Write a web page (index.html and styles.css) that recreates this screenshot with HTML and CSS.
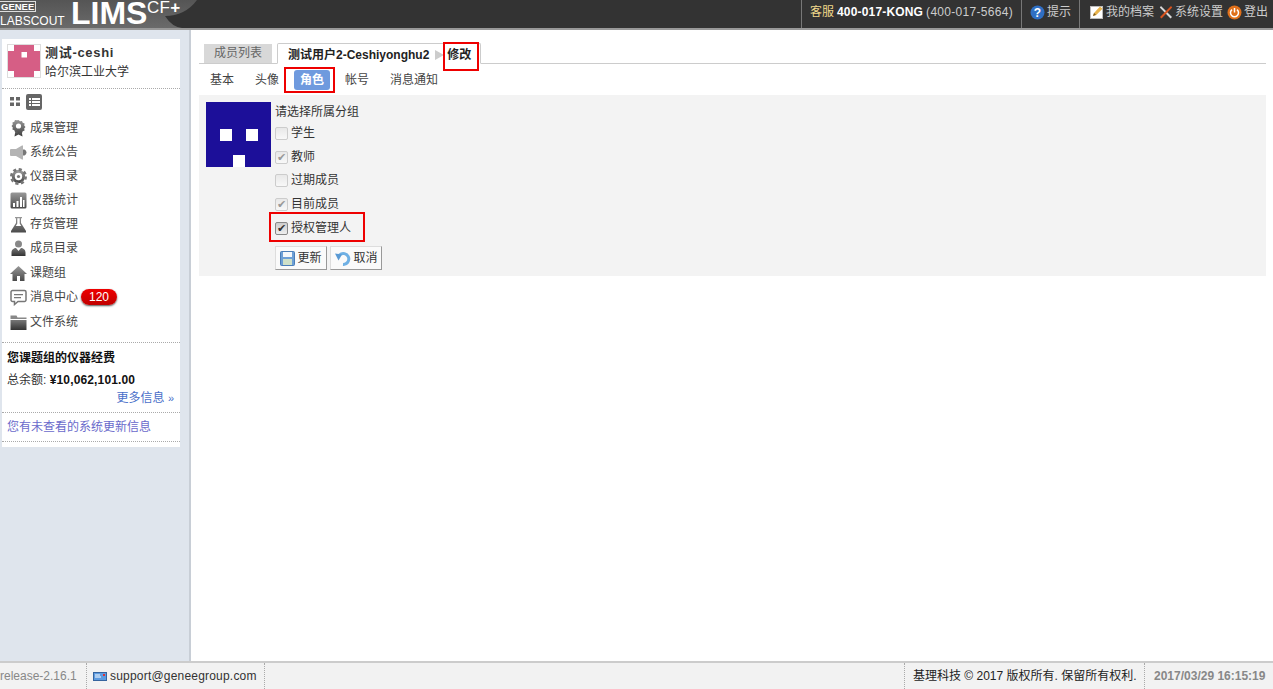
FILE: index.html
```html
<!DOCTYPE html>
<html lang="zh">
<head>
<meta charset="utf-8">
<title>LIMS</title>
<link rel="stylesheet" href="styles.css">
</head>
<body>
<svg class="defs" width="0" height="0"><defs><linearGradient id="gr" x1="0" y1="0" x2="0" y2="1"><stop offset="0" stop-color="#999"/><stop offset="1" stop-color="#4a4a4a"/></linearGradient><linearGradient id="grd" x1="0" y1="0" x2="0" y2="1"><stop offset="0" stop-color="#777"/><stop offset="1" stop-color="#333"/></linearGradient></defs></svg>
<header class="top">
  <div class="logo">
    <svg class="logo-bg" width="210" height="28" viewBox="0 0 210 28"><path d="M165 16Q172 27 182 28H210V0H197Q185 16 165 16z" fill="#333"/></svg>
    <div class="logo-left"><span class="genee">GENEE</span><span class="labscout">LABSCOUT</span></div>
    <span class="lims">LIMS</span><span class="cf">CF<b>+</b></span>
  </div>
  <div class="top-right">
    <div class="seg seg-tel"><span class="kf">客服</span><b>400-017-KONG</b><span class="tel">(400-017-5664)</span></div>
    <div class="seg seg-tip">
      <svg class="ti" width="15" height="15" viewBox="0 0 15 15"><circle cx="7.5" cy="7.5" r="7" fill="#2f6fc4"/><text x="7.5" y="11.5" text-anchor="middle" class="q">?</text></svg>
      <span>提示</span>
    </div>
    <div class="seg seg-links">
      <svg class="ti" width="14" height="14" viewBox="0 0 14 14"><rect x="0.5" y="1.5" width="12" height="12" fill="#fff" stroke="#bbb"/><path d="M3 11l1-3 6-6.500 2.500 2.200-6.500 6.500z" fill="#e9b44c"/><path d="M3 11l1-3 2 1.700z" fill="#7a5a20"/></svg>
      <span class="lk1">我的档案</span>
      <svg class="ti" width="14" height="14" viewBox="0 0 14 14"><path d="M2 1l11 11-1.500 1.500L.8 2.500z" fill="#d8d8d8"/><path d="M12 1L1 12l1.500 1.500L13.200 2.500z" fill="#d9531e"/></svg>
      <span class="lk2">系统设置</span>
      <svg class="ti" width="15" height="15" viewBox="0 0 15 15"><circle cx="7.5" cy="7.5" r="7" fill="#e0701a"/><path d="M5 4.600a4 4 0 1 0 5 0" fill="none" stroke="#fff" stroke-width="1.500"/><path d="M7.500 3v4.500" stroke="#fff" stroke-width="1.500"/></svg>
      <span>登出</span>
    </div>
  </div>
</header>

<div class="body">
  <aside class="side">
    <div class="card">
      <div class="me">
        <svg class="me-pic" width="34" height="34" viewBox="0 0 34 34"><rect x="0.500" y="0.500" width="33" height="33" fill="#d65e85" stroke="#ddd"/><rect x="1" y="1" width="6" height="6" fill="#fff"/><rect x="27" y="1" width="6" height="6" fill="#fff"/><rect x="1" y="27" width="6" height="6" fill="#fff"/><rect x="27" y="27" width="6" height="6" fill="#fff"/><rect x="14.500" y="8" width="5.500" height="5.500" fill="#fff"/></svg>
        <div class="me-text">
          <div class="me-name">测试-ceshi</div>
          <div class="me-org">哈尔滨工业大学</div>
        </div>
      </div>
      <div class="view-switch">
        <svg width="11" height="9" viewBox="0 0 11 9"><path d="M0 0h4v3.500H0zM6 0h4v3.500H6zM0 5.500h4V9H0zM6 5.500h4V9H6z" fill="#666"/></svg>
        <span class="vs-on"><svg width="11" height="10" viewBox="0 0 11 10"><path d="M0 1h2v2H0zM3 1h8v2H3zM0 4h2v2H0zM3 4h8v2H3zM0 7h2v2H0zM3 7h8v2H3z" fill="#fff"/></svg></span>
      </div>
      <nav class="nav">
        <div class="nav-row"><svg class="ni" width="17" height="17" viewBox="0 0 17 17"><path d="M5.500 10l-1 6.500 4-2 4 2-1-6.500z" fill="url(#grd)"/><path d="M8.500 0l1.500 1.300 2-.4.700 1.900 1.900.7-.4 2 1.300 1.500-1.300 1.500.4 2-1.900.7-.7 1.900-2-.4-1.500 1.300L7 11.700l-2 .4-.7-1.900-1.900-.7.4-2L1.500 6l1.300-1.500-.4-2 1.900-.7.7-1.900 2 .4z" fill="url(#gr)"/><circle cx="8.500" cy="6" r="2.600" fill="#fff"/></svg><span>成果管理</span></div>
        <div class="nav-row"><svg class="ni" width="17" height="17" viewBox="0 0 17 17"><path d="M0 6q0-1 1-1h5l6-3.500h1v14h-1L6 12H1q-1 0-1-1z" fill="#b4b4b4"/><path d="M13 5.500h1.500q2 1 2 3t-2 3H13z" fill="#777"/></svg><span>系统公告</span></div>
        <div class="nav-row"><svg class="ni" width="17" height="17" viewBox="0 0 17 17"><circle cx="8.500" cy="8.500" r="5.200" fill="none" stroke="url(#gr)" stroke-width="3"/><circle cx="8.500" cy="8.500" r="7" fill="none" stroke="#777" stroke-width="3" stroke-dasharray="3 2.500"/><circle cx="8.500" cy="8.500" r="1.600" fill="#777"/></svg><span>仪器目录</span></div>
        <div class="nav-row"><svg class="ni" width="17" height="17" viewBox="0 0 17 17"><rect x="0.500" y="0.500" width="16" height="16" rx="1.500" fill="url(#gr)"/><path d="M3 11h2v4H3zM6.500 9h2v6h-2zM10 5h2v10h-2zM13 8h1.500v7H13z" fill="#fff"/></svg><span>仪器统计</span></div>
        <div class="nav-row"><svg class="ni" width="17" height="17" viewBox="0 0 17 17"><path d="M5 1h7v1.200h-1V7l5 8v1.500H1V15l5-8V2.200H5z" fill="url(#gr)"/><path d="M7.300 2.200h2.400V7.500l1.500 2.500H5.800l1.500-2.500z" fill="#fff"/></svg><span>存货管理</span></div>
        <div class="nav-row"><svg class="ni" width="17" height="17" viewBox="0 0 17 17"><circle cx="8.500" cy="4" r="3.500" fill="#888"/><path d="M1.500 16v-3.500c0-3 2.500-4.500 4.500-4.500l2.500 3 2.500-3c2 0 4.500 1.500 4.500 4.500V16z" fill="url(#grd)"/></svg><span>成员目录</span></div>
        <div class="nav-row nav-gap"><svg class="ni" width="17" height="17" viewBox="0 0 17 17"><path d="M8.500 1L0 9h2.500v7H7v-5h3v5h4.500V9H17z" fill="url(#gr)"/></svg><span>课题组</span></div>
        <div class="nav-row"><svg class="ni" width="17" height="17" viewBox="0 0 17 17"><path d="M2.500 1.500h12a1.500 1.500 0 0 1 1.500 1.500v8a1.500 1.500 0 0 1-1.500 1.500H8l-3.500 3v-3h-2A1.500 1.500 0 0 1 1 11V3a1.500 1.500 0 0 1 1.500-1.500z" fill="#fff" stroke="#777" stroke-width="1.500"/><path d="M4 5h9v1.200H4zM4 8h7v1.200H4z" fill="#777"/></svg><span>消息中心</span><span class="badge">120</span></div>
        <div class="nav-row nav-gap"><svg class="ni" width="17" height="17" viewBox="0 0 17 17"><path d="M0.500 1.500h6l1 2h9v1.500H.5z" fill="#888"/><path d="M.5 6h16v10H.5z" fill="url(#grd)"/></svg><span>文件系统</span></div>
      </nav>
      <section class="fund">
        <h3 class="fund-title">您课题组的仪器经费</h3>
        <div class="fund-total">总余额: <b>¥10,062,101.00</b></div>
        <div class="fund-more"><a class="link">更多信息 <span class="raquo">»</span></a></div>
      </section>
      <div class="notice"><a class="link">您有未查看的系统更新信息</a></div>
    </div>
  </aside>

  <main class="main">
    <div class="tabs">
      <span class="tab">成员列表</span>
      <div class="tab-active">
        <b>测试用户2-Ceshiyonghu2</b>
        <span class="arrow"></span>
        <b class="edit">修改</b>
      </div>
    </div>
    <div class="subtabs">
      <span class="st">基本</span>
      <span class="st">头像</span>
      <span class="st st-on">角色</span>
      <span class="st">帐号</span>
      <span class="st">消息通知</span>
    </div>
    <div class="panel">
      <svg class="pic" width="65" height="65" viewBox="0 0 65 65"><rect width="65" height="65" fill="#1c0f99"/><rect x="14" y="27" width="12" height="12" fill="#fff"/><rect x="40" y="27" width="12" height="12" fill="#fff"/><rect x="27" y="53" width="12" height="12" fill="#fff"/></svg>
      <form class="form">
        <div class="form-title">请选择所属分组</div>
        <label class="chk"><span class="box"></span>学生</label>
        <label class="chk"><span class="box box-dis">✔</span>教师</label>
        <label class="chk chk-tight"><span class="box"></span>过期成员</label>
        <label class="chk"><span class="box box-dis">✔</span>目前成员</label>
        <label class="chk"><span class="box box-on">✔</span>授权管理人</label>
        <div class="btns">
          <span class="btn"><svg width="15" height="15" viewBox="0 0 15 15"><rect x="0.500" y="0.500" width="14" height="14" rx="1" fill="#6d9fd6" stroke="#4a7db8"/><rect x="3" y="1" width="9" height="5" fill="#f4f7fb"/><rect x="3" y="8" width="9" height="6" fill="#cfe0c8"/></svg>更新</span>
          <span class="btn"><svg width="17" height="15" viewBox="0 0 17 15"><path d="M9 13.500A5.500 5.500 0 1 0 5.500 4" fill="none" stroke="#6fb0e4" stroke-width="3"/><path d="M1 2.500l7 1-3.500 6z" fill="#5a9ad4"/></svg>取消</span>
        </div>
      </form>
    </div>
    <i class="mark mark-edit"></i>
    <i class="mark mark-role"></i>
    <i class="mark mark-admin"></i>
  </main>
</div>

<footer class="foot">
  <div class="f-ver">release-2.16.1</div>
  <div class="f-mail"><svg width="14" height="9" viewBox="0 0 14 9"><rect x="0.500" y="0.500" width="13" height="8" fill="#5d9be0" stroke="#35649e"/><rect x="10" y="2" width="2" height="2" fill="#d33"/><path d="M2 3h5M2 5h6" stroke="#fff"/></svg><span>support@geneegroup.com</span></div>
  <div class="f-space"></div>
  <div class="f-copy">基理科技 © 2017 版权所有. 保留所有权利.</div>
  <div class="f-time">2017/03/29 16:15:19</div>
</footer>
</body>
</html>
```

FILE: styles.css
```css
* { box-sizing: border-box; }
html, body { height: 100%; }
body {
  margin: 0;
  display: flex;
  flex-direction: column;
  height: 689px;
  overflow: hidden;
  font: 12px/16px "Liberation Sans", "Noto Sans CJK SC", sans-serif;
  color: #333;
  background: #fff;
}
.defs { position: absolute; }
.top {
  flex: 0 0 30px;
  display: flex;
  justify-content: space-between;
  background: #333;
  border-bottom: 2px solid #999;
  color: #ccc;
}
.logo {
  width: 210px;
  position: relative;
  display: flex;
  align-items: flex-start;
  color: #fff;
  background: linear-gradient(#555, #6a6a6a);
}
.logo-bg { position: absolute; left: 0; top: 0; }
.logo-left { position: relative; width: 66px; display: flex; flex-direction: column; align-items: flex-start; }
.genee {
  font: bold 9.5px/9px "Liberation Sans", sans-serif;
  height: 11px;
  width: 36px;
  padding: 0 0 0 1px;
  margin-top: 1px;
  border: 1px solid #ddd;
  border-left: 0;
}
.labscout { font: 12px/14px "Liberation Sans", sans-serif; margin-top: 2px; }
.lims { font: bold 32px/26px "Liberation Sans", sans-serif; margin-left: 5px; position: relative; width: 77px; white-space: nowrap; }
.cf { font: 17px/16px "Liberation Sans", sans-serif; position: relative; letter-spacing: .3px; margin-left: -1px; }
.top-right { display: flex; align-items: stretch; }
.seg {
  display: flex;
  align-items: center;
  border-left: 1px solid #777;
  padding-bottom: 4px;
}
.seg-tel { padding-left: 8px; width: 220px; gap: 3px; }
.kf { color: #f0d98c; }
.seg-tel b { color: #fff; letter-spacing: .17px; }
.tel { letter-spacing: .3px; }
.seg-tip { width: 58px; padding-left: 8px; }
.seg-links { width: 194px; padding-left: 10px; padding-right: 4px; }
.ti { flex: none; margin-right: 2px; }
.q { font: bold 12px "Liberation Sans", sans-serif; fill: #fff; }
.lk1 { margin-right: 5px; }
.lk2 { margin-right: 4px; }

.body { flex: 1; display: flex; min-height: 0; }
.side {
  flex: 0 0 191px;
  background: #dfe5ed;
  border-right: 2px solid #c8ced6;
  padding: 9px 9px 0 2px;
}
.card { background: #fff; padding-bottom: 5px; }
.me {
  display: flex;
  height: 50px;
  padding: 5px 0 0 5px;
  border-bottom: 1px dotted #aaa;
}
.me-pic { flex: none; }
.me-text { margin-left: 4px; }
.me-name { font-weight: bold; font-size: 13px; line-height: 16px; color: #333; letter-spacing: .7px; margin-top: 1px; margin-bottom: 3px; }
.me-org { line-height: 16px; }
.view-switch { display: flex; align-items: center; gap: 5px; height: 25px; padding: 0 0 0 8px; }
.vs-on {
  width: 16px; height: 16px;
  border-radius: 2px;
  background: #666;
  display: flex; align-items: center; justify-content: center;
}
.nav { padding: 2px 0 8px 8px; border-bottom: 1px dotted #aaa; }
.nav-row { display: flex; align-items: center; height: 24px; color: #444; }
.nav-gap { margin-top: 1px; }
.ni { flex: none; margin-right: 3px; }
.badge {
  margin-left: 3px;
  height: 16px;
  width: 36px;
  border-radius: 8px;
  background: linear-gradient(#ee0000, #c00000);
  box-shadow: 0 1px 2px #555;
  color: #fff;
  text-align: center;
  font-size: 12px;
  line-height: 16px;
}
.fund { padding: 7px 6px 0 5px; border-bottom: 1px dotted #aaa; height: 70px; }
.fund-title { margin: 0 0 6px; font-size: 12px; line-height: 16px; color: #111; }
.fund-total { line-height: 16px; color: #333; }
.fund-total b { color: #111; letter-spacing: .15px; }
.fund-more { text-align: right; line-height: 16px; margin-top: 2px; }
.link { color: #4a6fc9; }
.raquo { font-size: 11px; }
.notice { padding: 6px 5px 0; height: 29px; border-bottom: 1px dotted #aaa; }
.notice .link { color: #6a6acb; }

.main { flex: 1; position: relative; padding: 12px 7px 0 8px; }
.tabs {
  display: flex;
  align-items: flex-end;
  height: 22px;
  padding-left: 5px;
  border-bottom: 1px solid #ccc;
  gap: 5px;
}
.tab {
  width: 68px; height: 19px;
  background: #d8d8d8;
  color: #666;
  text-align: center;
  line-height: 19px;
}
.tab-active {
  display: flex;
  align-items: center;
  width: 204px;
  height: 21px;
  padding: 2px 0 0 10px;
  margin-bottom: -1px;
  background: #fff;
  border: 1px solid #ccc;
  border-bottom: 1px solid #fff;
  border-radius: 2px 2px 0 0;
  color: #222;
}
.arrow {
  margin: 0 3px 0 6px;
  border-left: 9px solid #ccc;
  border-top: 5px solid transparent;
  border-bottom: 5px solid transparent;
}
.subtabs { display: flex; align-items: center; height: 31px; padding-left: 5px; }
.st { padding: 0 6px; height: 20px; line-height: 20px; color: #444; margin-right: 9px; }
.st-on {
  width: 36px;
  text-align: center;
  padding: 0;
  background: #6f9ade;
  color: #fff;
  font-weight: bold;
  border-radius: 3px;
  margin-left: 0;
}
.panel {
  display: flex;
  height: 181px;
  padding: 7px 0 0 7px;
  background: #f3f3f3;
}
.pic { flex: none; }
.form { margin-left: 4px; }
.form-title { margin-top: 1px; height: 18px; line-height: 18px; color: #333; }
.chk { display: flex; align-items: center; height: 24px; color: #333; }
.chk-tight { margin-top: -1px; }
.box {
  flex: none;
  width: 13px; height: 13px;
  margin-right: 3px;
  border: 1px solid #ccc;
  border-radius: 2px;
  background: linear-gradient(#e8e8e8, #f8f8f8);
  color: #999;
  font: 11px/11px "DejaVu Sans", sans-serif;
  text-align: center;
}
.box-on { border-color: #888; color: #333; background: linear-gradient(#ccc, #eee); }
.btns { display: flex; gap: 3px; margin-top: 6px; }
.btn {
  display: flex;
  align-items: center;
  justify-content: center;
  width: 52px; height: 24px;
  gap: 2px;
  background: #fafafa;
  border: 1px solid #ddd;
  border-right-color: #999;
  border-bottom-color: #999;
  color: #333;
}
.mark { position: absolute; border: 2px solid #ee0000; }
.mark-edit { left: 252px; top: 12px; width: 36px; height: 29px; }
.mark-role { left: 93px; top: 37px; width: 51px; height: 26px; }
.mark-admin { left: 78px; top: 182px; width: 96px; height: 30px; }

.foot {
  flex: 0 0 28px;
  display: flex;
  align-items: stretch;
  background: #f2f2f2;
  border-top: 2px solid #ccc;
  line-height: 26px;
}
.foot > div { border-right: 1px dotted #aaa; }
.f-ver { width: 87px; color: #888; white-space: nowrap; overflow: hidden; }
.f-mail { display: flex; align-items: center; gap: 3px; width: 178px; padding-left: 6px; letter-spacing: .2px; }
.foot .f-space { flex: 1; }
.f-copy { width: 240px; padding-left: 8px; color: #222; }
.foot .f-time { width: 128px; padding-left: 9px; border-right: 0; color: #888; font-weight: bold; }
```
